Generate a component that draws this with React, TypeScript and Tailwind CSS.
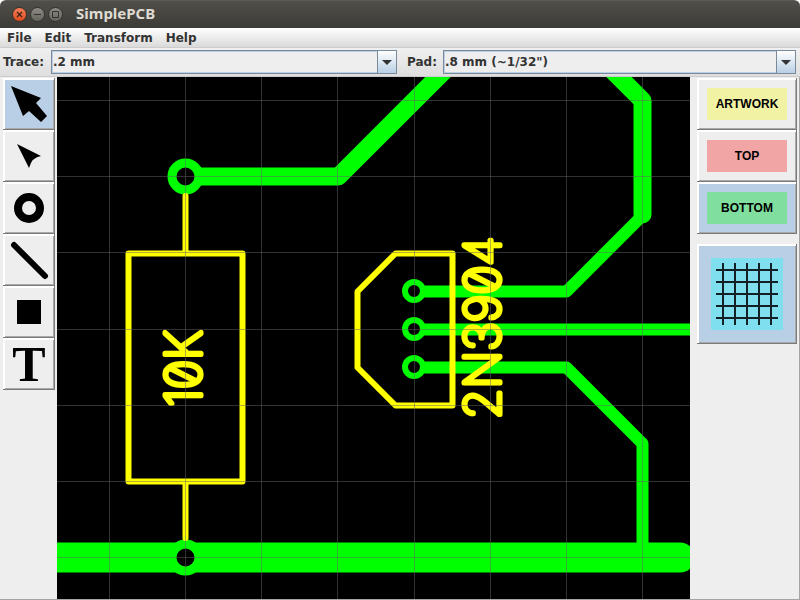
import { useState, type ReactNode } from "react";

const bevel =
  "shadow-[inset_-1px_-1px_#7a7a7a,inset_2px_2px_#fff,inset_-2px_-2px_#a9a9a9]";

function TitleBar() {
  return (
    <header className="flex h-7 shrink-0 items-center rounded-t-md border-t border-[#5a5954] bg-linear-to-b from-[#504f49] to-[#3c3b37] pl-3">
      <div className="flex gap-[3px]">
        <button aria-label="Close" className="flex size-[15px] items-center justify-center rounded-full border border-[#3a2f2a] bg-linear-to-b from-[#f47e56] to-[#df4a1b]">
          <svg className="size-[7px]" viewBox="0 0 7 7" stroke="#3a241c" strokeWidth="1.3">
            <path d="M1 1 6 6M6 1 1 6" />
          </svg>
        </button>
        <button aria-label="Minimize" className="flex size-[15px] items-center justify-center rounded-full border border-[#33322e] bg-linear-to-b from-[#8d8b83] to-[#66645d]">
          <svg className="size-[7px]" viewBox="0 0 7 7" stroke="#33322e" strokeWidth="1">
            <path d="M0 3.5H7" />
          </svg>
        </button>
        <button aria-label="Maximize" className="flex size-[15px] items-center justify-center rounded-full border border-[#33322e] bg-linear-to-b from-[#8d8b83] to-[#66645d]">
          <svg className="size-[7px]" viewBox="0 0 7 7" fill="none" stroke="#33322e" strokeWidth="1">
            <path d="M.5 .5H6.5V6.5H.5Z" />
          </svg>
        </button>
      </div>
      <h1 className="pb-[3px] pl-[13px] font-['Noto_Sans',sans-serif] text-[15px] leading-5 font-bold text-[#dfdbd2]">
        SimplePCB
      </h1>
    </header>
  );
}

function MenuBar() {
  return (
    <nav className="flex h-5 shrink-0 items-center gap-[13px] border-b border-[#cccccc] bg-linear-to-b from-white to-[#dadada] px-[7px]">
      {["File", "Edit", "Transform", "Help"].map((name) => (
        <button key={name}>{name}</button>
      ))}
    </nav>
  );
}

function Combo({ id, options, className }: { id: string; options: string[]; className: string }) {
  return (
    <div className={`relative h-6 border border-[#7a8a99] ${className}`}>
      <select
        id={id}
        className="block h-full w-full appearance-none border border-[#b8cfe5] bg-[#eeeeee] pr-5 outline-none"
      >
        {options.map((option) => (
          <option key={option}>{option}</option>
        ))}
      </select>
      <span className="pointer-events-none absolute inset-y-0 right-0 flex w-[19px] items-center justify-center border-l border-[#7a8a99] bg-linear-to-b from-white to-[#b8cfe5]">
        <svg width="10" height="5" viewBox="0 0 10 5" fill="#333333">
          <path d="M0 0H10L5 5Z" />
        </svg>
      </span>
    </div>
  );
}

function ToolBar() {
  return (
    <div className="flex h-[29px] shrink-0 items-center border-b border-[#cccccc] bg-linear-to-b from-[#f0f0f0] to-[#dedede] pr-1 pl-[3px]">
      <label htmlFor="trace" className="w-12">Trace:</label>
      <Combo id="trace" className="flex-[1_1_0px]" options={[".2 mm", ".4 mm", ".8 mm"]} />
      <label htmlFor="pad" className="w-[46px] pl-[10px]">Pad:</label>
      <Combo id="pad" className="flex-[1_1_9px]" options={['.8 mm (~1/32")', '1.6 mm (~1/16")']} />
    </div>
  );
}

const tools: { name: string; icon: ReactNode }[] = [
  { name: "Select", icon: <path d="M8 8 38 20 33 25 44 38 38 44 26 33 20 38Z" /> },
  { name: "Select part", icon: <path d="M14 14 38 26Q29 27 26 38Z" /> },
  { name: "Pad", icon: <circle cx="26" cy="26" r="11" fill="none" stroke="black" strokeWidth="8" /> },
  { name: "Trace", icon: <path d="M11 11 42 42" stroke="black" strokeWidth="6" strokeLinecap="round" /> },
  { name: "Fill", icon: <path d="M14 14H38V38H14Z" /> },
];

function ToolPalette() {
  const [active, setActive] = useState("Select");
  return (
    <aside className="flex w-[57px] shrink-0 flex-col pt-px pl-[3px]">
      {tools.map(({ name, icon }) => (
        <button
          key={name}
          aria-label={name}
          onClick={() => setActive(name)}
          className={`size-[52px] ${bevel} ${active === name ? "bg-[#b8cfe5]" : "bg-[#eeeeee]"}`}
        >
          <svg className="size-[52px]" viewBox="0 0 52 52">{icon}</svg>
        </button>
      ))}
      <button
        onClick={() => setActive("Text")}
        className={`size-[52px] font-['Liberation_Serif',serif] text-[50px] leading-[52px] text-black ${bevel} ${active === "Text" ? "bg-[#b8cfe5]" : "bg-[#eeeeee]"}`}
      >
        T
      </button>
    </aside>
  );
}

function Board() {
  const columns = Array.from({ length: 30 }, (_, i) => Math.floor(109.3 + i * 76.2) + 0.5);
  const rows = Array.from({ length: 20 }, (_, i) => Math.floor(100.4 + i * 76.2) + 0.5);
  return (
    <main className="min-w-0 flex-1 bg-black">
      <svg className="block h-full w-full overflow-hidden">
        <g transform="translate(-57 -77)">
          <g fill="none" stroke="#00ff00" strokeLinecap="round" strokeLinejoin="round">
            <g strokeWidth="18">
              <path d="M185.5 176.5H338.5L448.5 66.5" />
              <path d="M602.5 60.5 642.5 100.5V214.5" />
            </g>
            <g strokeWidth="12">
              <path d="M414 291.5H566.5L642.5 215.5" />
              <path d="M414 329.5H2000" />
              <path d="M414 367.5H566.5L642.5 443.5V557.5" />
            </g>
            <path d="M40 557.5H680" strokeWidth="30" />
          </g>
          <g fill="black" stroke="#00ff00">
            <circle cx="185.5" cy="176.5" r="13.5" strokeWidth="9" />
            <circle cx="185.5" cy="557.5" r="13.5" strokeWidth="9" />
            <circle cx="414" cy="291" r="9" strokeWidth="6" />
            <circle cx="414" cy="329" r="9" strokeWidth="6" />
            <circle cx="414" cy="367" r="9" strokeWidth="6" />
          </g>
          <g fill="none" stroke="#ffff00" strokeWidth="6" strokeLinecap="round" strokeLinejoin="round">
            <path d="M185.5 196V253M128.5 253.5H242.5V481.5H128.5ZM185.5 482V538" />
            <path d="M395.5 253.5H452.5V405.5H395.5L357.5 367.5V291.5Z" />
          </g>
          <g
            fill="#ffff00"
            stroke="#ffff00"
            strokeWidth="5"
            strokeLinejoin="round"
            className="font-['Inter',sans-serif] text-[49px] font-thin [font-feature-settings:'zero']"
          >
            <text transform="translate(201 407) rotate(-90)">10K</text>
            <text transform="translate(500 419) rotate(-90)">2N3904</text>
          </g>
          <g stroke="#646464" strokeOpacity=".5">
            {columns.map((x) => (
              <line key={x} x1={x} x2={x} y1="0" y2="2000" />
            ))}
            {rows.map((y) => (
              <line key={y} x1="0" x2="3000" y1={y} y2={y} />
            ))}
          </g>
        </g>
      </svg>
    </main>
  );
}

const layers = [
  { name: "ARTWORK", color: "bg-[#f2f2a5]" },
  { name: "TOP", color: "bg-[#f2a5a5]" },
  { name: "BOTTOM", color: "bg-[#80df9f]" },
];

function LayerPalette() {
  const [layer, setLayer] = useState("BOTTOM");
  const [grid, setGrid] = useState(true);
  return (
    <aside className="flex w-[109px] shrink-0 flex-col pt-px pl-[7px]">
      {layers.map(({ name, color }) => (
        <button
          key={name}
          onClick={() => setLayer(name)}
          className={`flex h-[52px] w-[100px] items-center justify-center ${bevel} ${layer === name ? "bg-[#b8cfe5]" : "bg-[#eeeeee]"}`}
        >
          <span className={`h-8 w-20 font-['Liberation_Sans',sans-serif] leading-8 text-black ${color}`}>
            {name}
          </span>
        </button>
      ))}
      <button
        aria-label="Grid"
        aria-pressed={grid}
        onClick={() => setGrid(!grid)}
        className={`mt-[10px] flex size-[100px] items-center justify-center ${bevel} ${grid ? "bg-[#b8cfe5]" : "bg-[#eeeeee]"}`}
      >
        <svg className="size-[72px] bg-[#80dfef]" viewBox="0 0 72 72" stroke="black" strokeOpacity=".85" strokeWidth="2">
          <path d="M12 5V67M24 5V67M36 5V67M48 5V67M60 5V67M5 12H67M5 24H67M5 36H67M5 48H67M5 60H67" />
        </svg>
      </button>
    </aside>
  );
}

export default function App() {
  return (
    <div className="flex h-screen flex-col bg-white font-['DejaVu_Sans',sans-serif] text-xs font-bold text-[#333333]">
      <TitleBar />
      <MenuBar />
      <ToolBar />
      <div className="flex min-h-0 flex-1 border-r border-b border-[#a5a5a5] bg-[#eeeeee]">
        <ToolPalette />
        <Board />
        <LayerPalette />
      </div>
    </div>
  );
}
